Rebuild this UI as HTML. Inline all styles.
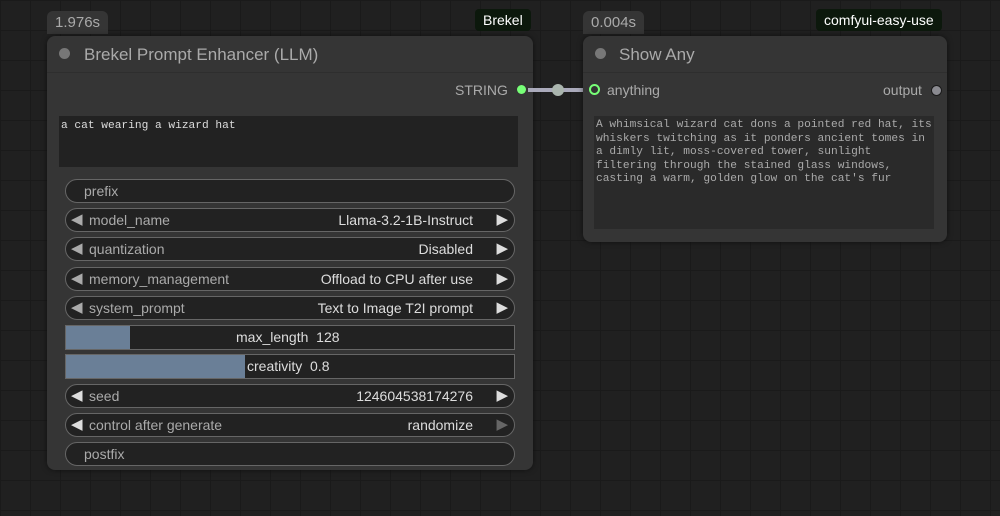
<!DOCTYPE html><html><head><style>
body{margin:0;width:1000px;height:516px;overflow:hidden;background:#202020;
background-image:linear-gradient(#1a1a1a 1px,transparent 1px),linear-gradient(90deg,#1a1a1a 1px,transparent 1px);background-size:30px 30px;
font-family:"Liberation Sans",sans-serif;position:relative}
.a{position:absolute}
.badge{background:#353535;color:#aaa;font-size:15px;border-radius:6px 6px 0 0;padding:3px 8px}
.tag{background:#0c180c;color:#fff;font-size:14px;border-radius:4px;padding:3px 8px}
.node{background:#353535;border-radius:8px;box-shadow:0 0 6px rgba(0,0,0,.5)}
.title{color:#aaa;font-size:17px}
.dot{width:11px;height:11px;border-radius:50%;background:#777}
.w{position:absolute;left:65px;width:450px;height:24px;border:1px solid #666;border-radius:13px;background:#222;color:#aaa;font-size:14px;box-sizing:border-box;line-height:22px}
.w .l{position:absolute;left:23px}.w .r{position:absolute;right:41px;color:#ddd}
.w .la{position:absolute;left:5px;color:#aaa;font-size:15px}.w .ra{position:absolute;right:6px;color:#ddd;font-size:15px}
.s{position:absolute;left:65px;width:450px;height:25px;border:1px solid #666;background:#222;box-sizing:border-box;color:#ddd;font-size:14px;line-height:23px}
.mono{font-family:"Liberation Mono","DejaVu Sans Mono",monospace;font-size:11.2px;line-height:13.5px;white-space:nowrap}
</style></head><body>
<div class="a badge" style="left:47px;top:11px">1.976s</div>
<div class="a tag" style="left:475px;top:9px">Brekel</div>
<div class="a node" style="left:47px;top:36px;width:486px;height:434px"></div>
<div class="a" style="left:47px;top:72px;width:486px;height:1px;background:#2e2e2e"></div>
<div class="a dot" style="left:59px;top:48px"></div>
<div class="a title" style="left:84px;top:45px">Brekel Prompt Enhancer (LLM)</div>
<div class="a" style="left:455px;top:82px;color:#aaa;font-size:14px">STRING</div>
<div class="a" style="left:517px;top:85px;width:9px;height:9px;border-radius:50%;background:#7f7"></div>
<div class="a" style="left:528px;top:88px;width:64px;height:4px;background:#aab"></div>
<div class="a" style="left:552px;top:84px;width:12px;height:12px;border-radius:50%;background:#aab5ae"></div>
<div class="a mono" style="left:59px;top:116px;width:459px;height:51px;background:#222;color:#ddd;padding:4px 2px;box-sizing:border-box">a cat wearing a wizard hat</div>
<div class="w" style="top:179px"><span class="l" style="left:18px">prefix</span></div>
<div class="w" style="top:208px"><span class="la">◀</span><span class="l">model_name</span><span class="r">Llama-3.2-1B-Instruct</span><span class="ra">▶</span></div>
<div class="w" style="top:237px"><span class="la">◀</span><span class="l">quantization</span><span class="r">Disabled</span><span class="ra">▶</span></div>
<div class="w" style="top:267px"><span class="la">◀</span><span class="l">memory_management</span><span class="r">Offload to CPU after use</span><span class="ra">▶</span></div>
<div class="w" style="top:296px"><span class="la">◀</span><span class="l">system_prompt</span><span class="r">Text to Image T2I prompt</span><span class="ra">▶</span></div>
<div class="s" style="top:325px"><div class="a" style="left:0;top:0;width:64px;height:23px;background:#6a7f97"></div><span class="a" style="left:170px">max_length&nbsp;&nbsp;128</span></div>
<div class="s" style="top:354px"><div class="a" style="left:0;top:0;width:179px;height:23px;background:#6a7f97"></div><span class="a" style="left:181px">creativity&nbsp;&nbsp;0.8</span></div>
<div class="w" style="top:384px"><span class="la" style="color:#ddd">◀</span><span class="l">seed</span><span class="r">124604538174276</span><span class="ra">▶</span></div>
<div class="w" style="top:413px"><span class="la" style="color:#ddd">◀</span><span class="l">control after generate</span><span class="r">randomize</span><span class="ra" style="color:#666">▶</span></div>
<div class="w" style="top:442px"><span class="l" style="left:18px">postfix</span></div>

<div class="a badge" style="left:583px;top:11px">0.004s</div>
<div class="a tag" style="left:816px;top:9px">comfyui-easy-use</div>
<div class="a node" style="left:583px;top:36px;width:364px;height:206px"></div>
<div class="a" style="left:583px;top:72px;width:364px;height:1px;background:#2e2e2e"></div>
<div class="a dot" style="left:595px;top:48px"></div>
<div class="a title" style="left:619px;top:45px">Show Any</div>
<div class="a" style="left:589px;top:84px;width:7px;height:7px;border-radius:50%;border:2px solid #7f7;background:#333"></div>
<div class="a" style="left:607px;top:82px;color:#aaa;font-size:14px">anything</div>
<div class="a" style="left:883px;top:82px;color:#aaa;font-size:14px">output</div>
<div class="a" style="left:931px;top:85px;width:9px;height:9px;border-radius:50%;background:#8a8a90;border:1px solid #1a1a1a"></div>
<div class="a mono" style="left:594px;top:116px;width:340px;height:113px;background:#2a2a2a;color:#aaa;padding:3px 2px;box-sizing:border-box;font-size:11.2px;overflow:hidden">A whimsical wizard cat dons a pointed red hat, its<br>whiskers twitching as it ponders ancient tomes in<br>a dimly lit, moss-covered tower, sunlight<br>filtering through the stained glass windows,<br>casting a warm, golden glow on the cat's fur</div>
</body></html>
